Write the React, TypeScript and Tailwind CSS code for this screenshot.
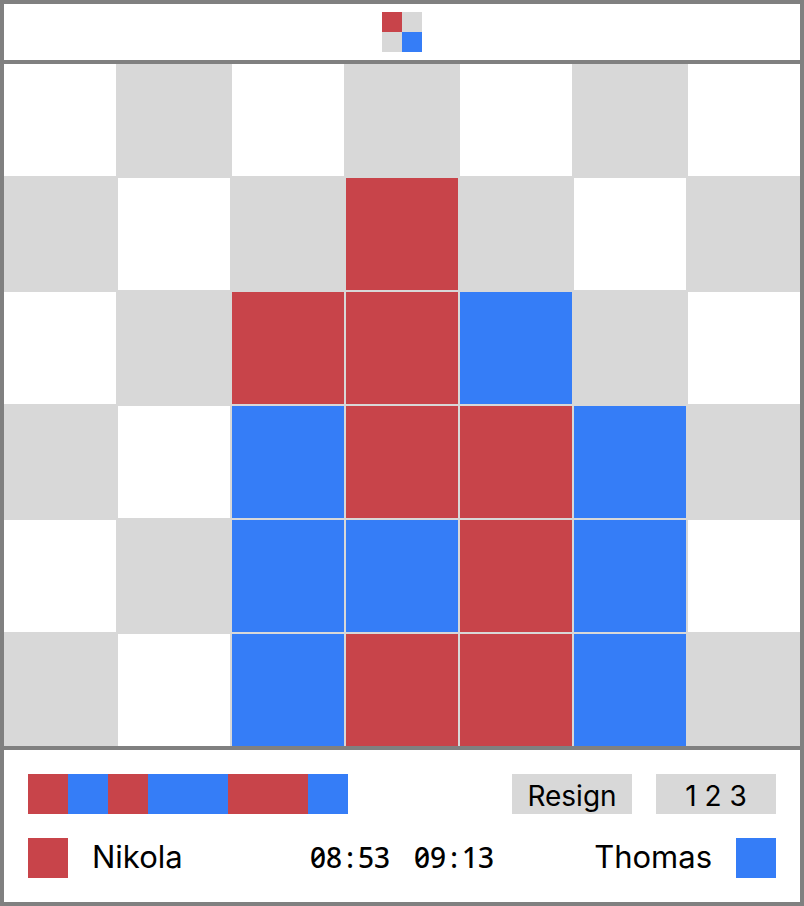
const fills = {
  w: 'bg-white',
  g: 'bg-[#d8d8d8]',
  r: 'bg-[#c8444a]',
  b: 'bg-[#357df7]',
};

type Fill = keyof typeof fills;

const board = ['wgwgwgw', 'gwgrgwg', 'wgrrbgw', 'gwbrrbg', 'wgbbrbw', 'gwbrrbg'];
const moves = 'rbrbbrrb';

function Square({ fill, className = '' }: { fill: string; className?: string }) {
  return <div className={`${fills[fill as Fill]} ${className}`} />;
}

function Clock({ minutes, seconds }: { minutes: string; seconds: string }) {
  return (
    <time className="flex font-['Noto_Sans',sans-serif] text-[28px] leading-[38px] font-medium tabular-nums slashed-zero">
      {minutes}
      <span className="w-4 text-center">:</span>
      {seconds}
    </time>
  );
}

export default function App() {
  return (
    <main className="border-4 border-[#808080] bg-white font-[Inter,sans-serif] text-black">
      <header className="flex justify-center border-b-4 border-[#808080] p-2">
        <div className="grid size-10 grid-cols-2">
          {[...'rggb'].map((fill, i) => (
            <Square key={i} fill={fill} />
          ))}
        </div>
      </header>

      <section aria-label="Board" className="grid grid-cols-7 gap-0.5 bg-[#d8d8d8]">
        {[...board.join('')].map((fill, i) => (
          <Square key={i} fill={fill} className="aspect-square" />
        ))}
      </section>

      <footer className="flex flex-col gap-6 border-t-4 border-[#808080] p-6">
        <div className="flex items-center justify-between">
          <div aria-label="Moves" className="flex">
            {[...moves].map((fill, i) => (
              <Square key={i} fill={fill} className="size-10" />
            ))}
          </div>
          <div className="flex gap-6 text-[28px]">
            <button type="button" className="h-10 w-30 bg-[#d8d8d8] pt-1 leading-9">
              Resign
            </button>
            <button type="button" className="h-10 w-30 bg-[#d8d8d8] pt-1 leading-9">
              1 2 3
            </button>
          </div>
        </div>
        <div className="grid grid-cols-[1fr_auto_1fr] items-start text-[31px] leading-[38px]">
          <div className="flex items-start gap-6">
            <Square fill="r" className="size-10" />
            <span>Nikola</span>
          </div>
          <div className="flex gap-6">
            <Clock minutes="08" seconds="53" />
            <Clock minutes="09" seconds="13" />
          </div>
          <div className="flex items-start justify-end gap-6">
            <span>Thomas</span>
            <Square fill="b" className="size-10" />
          </div>
        </div>
      </footer>
    </main>
  );
}
